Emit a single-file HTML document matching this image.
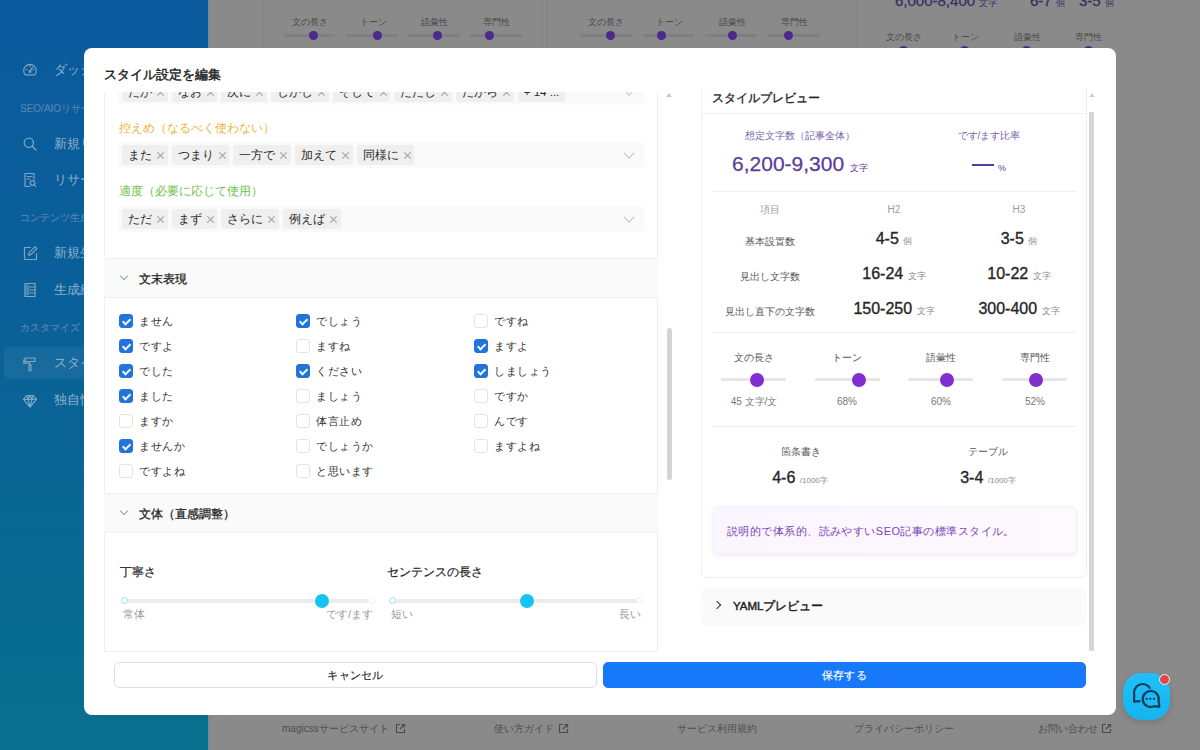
<!DOCTYPE html>
<html lang="ja">
<head>
<meta charset="utf-8">
<style>
*{box-sizing:border-box;margin:0;padding:0}
html,body{width:1200px;height:750px;overflow:hidden}
body{font-family:"Liberation Sans",sans-serif;background:#8a8a8a;position:relative;color:#262626}
.abs{position:absolute}
/* sidebar */
#side{left:0;top:0;width:208px;height:750px;background:linear-gradient(180deg,#0a5a9d 0%,#0a6099 40%,#08708e 100%)}
#sideedge{left:208px;top:0;width:3px;height:750px;background:#7d8a95}
.si{position:absolute;left:54px;font-size:13px;color:#8eb0cb;white-space:nowrap;line-height:16px}
.sl{position:absolute;left:20px;font-size:10px;color:#5584b3;-webkit-text-stroke:0.2px #5584b3;white-space:nowrap;line-height:12px}
.sic{position:absolute;left:23px;width:14px;height:14px}
#active{left:4px;top:347px;width:220px;height:32px;background:rgba(255,255,255,0.055);border-radius:6px}
/* bg content */
.vl{position:absolute;top:0;width:1px;background:#858585}
.bgl{position:absolute;font-size:9px;color:#4a4a4a;white-space:nowrap;transform:translateX(-50%);line-height:10px}
.trk{position:absolute;height:3px;background:#7f7f7f;border-radius:2px}
.dot{position:absolute;width:9px;height:9px;border-radius:50%;background:#4b2a8c}
.ft{position:absolute;top:722px;font-size:10px;color:#4d4d4d;white-space:nowrap;line-height:14px}
/* modal */

#modal{left:84px;top:48px;width:1032px;height:667px;background:#fff;border-radius:8px}
.ttl{font-size:13px;color:#1f1f1f;line-height:20px;white-space:nowrap;-webkit-text-stroke:0.45px #1f1f1f}
#lclip{left:104px;top:92px;width:558px;height:559px;overflow:hidden}
#lclip>div{position:absolute}
.sel{width:526px;height:26px;background:#fafafa;border-radius:4px;padding:3px 4px;white-space:nowrap;font-size:0}
.tg{display:inline-block;height:20px;line-height:20px;background:#efefef;border-radius:3px;padding:0 15.5px 0 6px;margin-right:4.2px;font-size:11.5px;color:#2b2b2b;vertical-align:top;position:relative}
.tx{position:absolute;right:3.5px;top:6.5px;width:7px;height:7px}.tx::before,.tx::after{content:"";position:absolute;left:-1px;top:3px;width:9px;height:1px;background:#a0a0a0;transform:rotate(45deg)}.tx::after{transform:rotate(-45deg)}
.chev{position:absolute;right:11px;top:7px;width:8px;height:8px;border-right:1px solid #c4c4c4;border-bottom:1px solid #c4c4c4;transform:rotate(45deg)}
.lbl{font-size:12px;line-height:16px;white-space:nowrap}
.chd{left:0;width:554px;height:40px;background:#fafafa;border-top:1px solid #f0f0f0;border-bottom:1px solid #f0f0f0}
.chd span{position:absolute;left:35px;top:11px;font-size:12px;color:#262626;line-height:18px;white-space:nowrap;-webkit-text-stroke:0.3px #262626}
.cv{position:absolute;left:17px;top:14px;width:6px;height:6px;border-right:1px solid #7fa6bd;border-bottom:1px solid #7fa6bd;transform:rotate(45deg)}
.cb{width:14px;height:14px;border:1px solid #e3e3e3;border-radius:3px;background:#fff}
.cb.on{background:#2273da;border-color:#2273da}
.cb.on::after{content:"";position:absolute;left:3.8px;top:1.6px;width:3.2px;height:6.2px;border-right:2.2px solid #f2fbff;border-bottom:2.2px solid #f2fbff;transform:rotate(45deg)}
.cbl{font-size:11px;letter-spacing:0.5px;line-height:16px;color:#333;white-space:nowrap}
.slab{font-size:12px;color:#262626;line-height:16px;white-space:nowrap;-webkit-text-stroke:0.2px #262626}
.strk{height:4px;background:#ededed;border-radius:2px}
.sdot{width:7px;height:7px;border-radius:50%;border:1.5px solid #9fdcf0;background:#fff}
.sdot.e{border-color:#f2f2f2}
.sthumb{width:14px;height:14px;border-radius:50%;background:#17c3f2}
.smk{font-size:11px;color:#9a9a9a;line-height:14px;white-space:nowrap}
#rclip{left:700px;top:88px;width:388px;height:563px;overflow:hidden}
#rclip>div{position:absolute}
.rcard{border:1px solid #f0f0f0;border-radius:6px;background:#fff}
.rtitle{font-size:12px;color:#1f1f1f;line-height:18px;white-space:nowrap;-webkit-text-stroke:0.35px #1f1f1f}
.c{text-align:center;white-space:nowrap}
.psub{font-size:10px;color:#7a62a8;line-height:14px}
.pbig{font-size:21px;color:#5a3c98;line-height:28px;-webkit-text-stroke:0.25px #5a3c98}
.pbig small{-webkit-text-stroke:0}
.pbig small{font-size:9px;color:#5b3c98}
.thd{font-size:10px;color:#9a9a9a;line-height:14px}
.tlab{font-size:10px;color:#555;line-height:14px}
.tval{font-size:16px;color:#262626;line-height:20px;-webkit-text-stroke:0.35px #262626}
.tval small{font-size:9px;color:#8a8a8a;-webkit-text-stroke:0}
.tval2{font-size:16px;color:#262626;line-height:22px;-webkit-text-stroke:0.35px #262626}
.tval2 small{font-size:8px;color:#8a8a8a;-webkit-text-stroke:0}
.tsm{font-size:10px;color:#777;line-height:14px}
.ptrk{width:65px;height:3px;background:#e6e6e6;border-radius:2px}
.pdot{width:14px;height:14px;border-radius:50%;background:#7f2fd0}
.desc{width:364px;height:48px;border-radius:6px;background:linear-gradient(90deg,#fbf5fe,#fdf9fe);border:1px solid #f5eff9;box-shadow:0 2px 5px rgba(90,40,140,0.09);padding:15px 0 0 13px;font-size:11px;letter-spacing:0.45px;color:#7a42b8;white-space:nowrap;line-height:18px}
.yaml{width:384px;height:36px;background:#fafafa;border-radius:6px;box-shadow:0 1px 3px rgba(0,0,0,0.05)}
.yaml span{position:absolute;left:31px;top:9px;font-size:11.5px;color:#1f1f1f;line-height:18px;white-space:nowrap;-webkit-text-stroke:0.45px #1f1f1f}
.yv{position:absolute;left:12px;top:14px;width:6px;height:6px;border-right:1.3px solid #333;border-bottom:1.3px solid #333;transform:rotate(-45deg)}
.btn{position:absolute;height:26px;border:1px solid #e0e0e0;border-radius:5px;background:#fff;text-align:center;font-size:11px;letter-spacing:0.3px;line-height:24px;color:#262626;-webkit-text-stroke:0.15px #262626}
.btn.pri{background:#1878fa;border-color:#1878fa;color:#fff;-webkit-text-stroke:0.15px #fff}
</style>
</head>
<body>
<div id="side" class="abs"></div>
<div id="sideedge" class="abs"></div>
<div id="active" class="abs"></div>

<!-- background content -->
<div class="vl" style="left:228px;height:750px;background:#888"></div>
<div class="vl" style="left:263px;height:48px"></div>
<div class="vl" style="left:542px;height:48px"></div>
<div class="vl" style="left:546px;height:48px"></div>
<div class="vl" style="left:856px;height:48px"></div>

<div class="bgl" style="left:310px;top:17px">文の長さ</div>
<div class="bgl" style="left:373px;top:17px">トーン</div>
<div class="bgl" style="left:434px;top:17px">語彙性</div>
<div class="bgl" style="left:496px;top:17px">専門性</div>
<div class="trk" style="left:284px;top:34px;width:51px"></div>
<div class="trk" style="left:346px;top:34px;width:52px"></div>
<div class="trk" style="left:408px;top:34px;width:52px"></div>
<div class="trk" style="left:470px;top:34px;width:52px"></div>
<div class="dot" style="left:309px;top:31px"></div>
<div class="dot" style="left:373px;top:31px"></div>
<div class="dot" style="left:433px;top:31px"></div>
<div class="dot" style="left:485px;top:31px"></div>

<div class="bgl" style="left:606px;top:17px">文の長さ</div>
<div class="bgl" style="left:669px;top:17px">トーン</div>
<div class="bgl" style="left:732px;top:17px">語彙性</div>
<div class="bgl" style="left:794px;top:17px">専門性</div>
<div class="trk" style="left:580px;top:34px;width:52px"></div>
<div class="trk" style="left:643px;top:34px;width:51px"></div>
<div class="trk" style="left:705px;top:34px;width:52px"></div>
<div class="trk" style="left:768px;top:34px;width:52px"></div>
<div class="dot" style="left:606px;top:31px"></div>
<div class="dot" style="left:657px;top:31px"></div>
<div class="dot" style="left:728px;top:31px"></div>
<div class="dot" style="left:784px;top:31px"></div>

<div class="abs" style="left:895px;top:-8px;font-size:15px;color:#3b2d6c;white-space:nowrap;-webkit-text-stroke:0.3px #3b2d6c">6,000-8,400 <span style="font-size:9px;-webkit-text-stroke:0">文字</span></div>
<div class="abs" style="left:1030px;top:-8px;font-size:15px;color:#34305a;white-space:nowrap;-webkit-text-stroke:0.3px #34305a">6-7 <span style="font-size:9px;-webkit-text-stroke:0">個</span></div>
<div class="abs" style="left:1079px;top:-8px;font-size:15px;color:#34305a;white-space:nowrap;-webkit-text-stroke:0.3px #34305a">3-5 <span style="font-size:9px;-webkit-text-stroke:0">個</span></div>
<div class="dot" style="left:899px;top:46px"></div>
<div class="dot" style="left:960px;top:46px"></div>
<div class="dot" style="left:1022px;top:46px"></div>
<div class="dot" style="left:1084px;top:46px"></div>
<div class="bgl" style="left:904px;top:32px">文の長さ</div>
<div class="bgl" style="left:965px;top:32px">トーン</div>
<div class="bgl" style="left:1027px;top:32px">語彙性</div>
<div class="bgl" style="left:1088px;top:32px">専門性</div>

<div class="ft" style="left:282px">magicssサービスサイト</div>
<div class="ft" style="left:494px">使い方ガイド</div>
<div class="ft" style="left:677px">サービス利用規約</div>
<div class="ft" style="left:854px">プライバシーポリシー</div>
<div class="ft" style="left:1038px">お問い合わせ</div>


<!-- sidebar icons -->
<svg class="abs" style="left:22px;top:62px" width="16" height="16" viewBox="0 0 16 16" fill="none" stroke="#7ea5c4" stroke-width="1.2" stroke-linecap="round">
<path d="M3.2 12.8A6.3 6.3 0 1 1 12.8 12.8Z" stroke-linejoin="round"/><path d="M8 9.2L10.6 5.2"/><circle cx="8" cy="9.4" r="0.9"/><path d="M4.3 7.4l.6.3M8 3.6v.7M11.7 7.4l-.6.3"/>
</svg>
<svg class="abs" style="left:22px;top:136px" width="16" height="16" viewBox="0 0 16 16" fill="none" stroke="#7ea5c4" stroke-width="1.3" stroke-linecap="round">
<circle cx="6.8" cy="6.8" r="4.6"/><path d="M10.3 10.3L14 14"/>
</svg>
<svg class="abs" style="left:22px;top:172px" width="16" height="16" viewBox="0 0 16 16" fill="none" stroke="#7ea5c4" stroke-width="1.2" stroke-linecap="round" stroke-linejoin="round">
<path d="M8 14.5H3V1.5h9v5.5"/><path d="M5 4.5h5M5 7h3"/><circle cx="10.5" cy="11" r="2.3"/><path d="M12.2 12.7l1.6 1.6"/>
</svg>
<svg class="abs" style="left:22px;top:245px" width="16" height="16" viewBox="0 0 16 16" fill="none" stroke="#7ea5c4" stroke-width="1.2" stroke-linecap="round" stroke-linejoin="round">
<path d="M8.5 2.5H2.5v12h12v-6"/><path d="M6.5 10.2l.5-2.4 6-6 1.9 1.9-6 6z"/>
</svg>
<svg class="abs" style="left:22px;top:282px" width="16" height="16" viewBox="0 0 16 16" fill="none" stroke="#7ea5c4" stroke-width="1.2" stroke-linecap="round" stroke-linejoin="round">
<rect x="3" y="1.5" width="10" height="13"/><path d="M3 5h10M3 8h10M3 11h10M5 3.2h1M5 6.5h1M5 9.5h1M5 12.7h1"/>
</svg>
<svg class="abs" style="left:22px;top:356px" width="16" height="16" viewBox="0 0 16 16" fill="none" stroke="#7ea5c4" stroke-width="1.2" stroke-linecap="round" stroke-linejoin="round">
<path d="M3 2h10v3.5H3z"/><path d="M3 3.8H1.8v3.4h6.2v2"/><path d="M7 9.2h2v5.5H7z"/>
</svg>
<svg class="abs" style="left:22px;top:393px" width="16" height="16" viewBox="0 0 16 16" fill="none" stroke="#7ea5c4" stroke-width="1.2" stroke-linecap="round" stroke-linejoin="round">
<path d="M4.5 2.5h7l3 3.8L8 14 1.5 6.3z"/><path d="M1.5 6.3h13M6 6.3L8 14l2-7.7M5.2 2.7L6 6.3l2-3.8 2 3.8.8-3.6"/>
</svg>
<!-- footer link icons -->
<svg class="abs" style="left:395px;top:723px" width="11" height="11" viewBox="0 0 11 11" fill="none" stroke="#4a4a4a" stroke-width="1.1"><path d="M5 1.5H1.5v8h8V6"/><path d="M6.5 1.5h3v3M9.5 1.5L5 6"/></svg>
<svg class="abs" style="left:558px;top:723px" width="11" height="11" viewBox="0 0 11 11" fill="none" stroke="#4a4a4a" stroke-width="1.1"><path d="M5 1.5H1.5v8h8V6"/><path d="M6.5 1.5h3v3M9.5 1.5L5 6"/></svg>
<svg class="abs" style="left:1101px;top:723px" width="11" height="11" viewBox="0 0 11 11" fill="none" stroke="#4a4a4a" stroke-width="1.1"><path d="M5 1.5H1.5v8h8V6"/><path d="M6.5 1.5h3v3M9.5 1.5L5 6"/></svg>
<!-- sidebar items -->
<div class="si" style="top:62px">ダッシュボード</div>
<div class="sl" style="top:103px">SEO/AIOリサーチ</div>
<div class="si" style="top:136px">新規リサーチ</div>
<div class="si" style="top:172px">リサーチ結果</div>
<div class="sl" style="top:212px">コンテンツ生成</div>
<div class="si" style="top:245px">新規生成</div>
<div class="si" style="top:282px">生成結果一覧</div>
<div class="sl" style="top:322px">カスタマイズ</div>
<div class="si" style="top:355px">スタイル設定</div>
<div class="si" style="top:392px">独自情報</div>

<div id="modal" class="abs"></div>
<div class="abs ttl" style="left:104px;top:65px">スタイル設定を編集</div>
<div id="lclip" class="abs">
<div class="sel" style="left:14px;top:-13px"><span class="tg">だが<i class="tx"></i></span><span class="tg">なお<i class="tx"></i></span><span class="tg">次に<i class="tx"></i></span><span class="tg">しかし<i class="tx"></i></span><span class="tg">そして<i class="tx"></i></span><span class="tg">ただし<i class="tx"></i></span><span class="tg">だから<i class="tx"></i></span><span class="tg" style="padding-right:6px">+ 14 ...</span><i class="chev"></i></div>
<div class="lbl" style="left:15px;top:28px;color:#f0b33c">控えめ（なるべく使わない）</div>
<div class="sel" style="left:14px;top:50px"><span class="tg">また<i class="tx"></i></span><span class="tg">つまり<i class="tx"></i></span><span class="tg">一方で<i class="tx"></i></span><span class="tg">加えて<i class="tx"></i></span><span class="tg">同様に<i class="tx"></i></span><i class="chev"></i></div>
<div class="lbl" style="left:15px;top:91px;color:#6cc24a">適度（必要に応じて使用）</div>
<div class="sel" style="left:14px;top:114px"><span class="tg">ただ<i class="tx"></i></span><span class="tg">まず<i class="tx"></i></span><span class="tg">さらに<i class="tx"></i></span><span class="tg">例えば<i class="tx"></i></span><i class="chev"></i></div>
<div class="abs" style="left:0;top:0;width:1px;height:600px;background:#f0f0f0"></div>
<div class="abs" style="left:553px;top:0;width:1px;height:600px;background:#f0f0f0"></div>
<div class="chd" style="top:166px"><i class="cv"></i><span>文末表現</span></div>
<div class="cb on" style="left:15px;top:222px"></div>
<div class="cbl" style="left:35px;top:221px">ません</div>
<div class="cb on" style="left:15px;top:247px"></div>
<div class="cbl" style="left:35px;top:246px">ですよ</div>
<div class="cb on" style="left:15px;top:272px"></div>
<div class="cbl" style="left:35px;top:271px">でした</div>
<div class="cb on" style="left:15px;top:297px"></div>
<div class="cbl" style="left:35px;top:296px">ました</div>
<div class="cb" style="left:15px;top:322px"></div>
<div class="cbl" style="left:35px;top:321px">ますか</div>
<div class="cb on" style="left:15px;top:347px"></div>
<div class="cbl" style="left:35px;top:346px">ませんか</div>
<div class="cb" style="left:15px;top:372px"></div>
<div class="cbl" style="left:35px;top:371px">ですよね</div>
<div class="cb on" style="left:192px;top:222px"></div>
<div class="cbl" style="left:212px;top:221px">でしょう</div>
<div class="cb" style="left:192px;top:247px"></div>
<div class="cbl" style="left:212px;top:246px">ますね</div>
<div class="cb on" style="left:192px;top:272px"></div>
<div class="cbl" style="left:212px;top:271px">ください</div>
<div class="cb" style="left:192px;top:297px"></div>
<div class="cbl" style="left:212px;top:296px">ましょう</div>
<div class="cb" style="left:192px;top:322px"></div>
<div class="cbl" style="left:212px;top:321px">体言止め</div>
<div class="cb" style="left:192px;top:347px"></div>
<div class="cbl" style="left:212px;top:346px">でしょうか</div>
<div class="cb" style="left:192px;top:372px"></div>
<div class="cbl" style="left:212px;top:371px">と思います</div>
<div class="cb" style="left:370px;top:222px"></div>
<div class="cbl" style="left:390px;top:221px">ですね</div>
<div class="cb on" style="left:370px;top:247px"></div>
<div class="cbl" style="left:390px;top:246px">ますよ</div>
<div class="cb on" style="left:370px;top:272px"></div>
<div class="cbl" style="left:390px;top:271px">しましょう</div>
<div class="cb" style="left:370px;top:297px"></div>
<div class="cbl" style="left:390px;top:296px">ですか</div>
<div class="cb" style="left:370px;top:322px"></div>
<div class="cbl" style="left:390px;top:321px">んです</div>
<div class="cb" style="left:370px;top:347px"></div>
<div class="cbl" style="left:390px;top:346px">ますよね</div>
<div class="chd" style="top:401px"><i class="cv"></i><span>文体（直感調整）</span></div>
<div class="slab" style="left:16px;top:472px">丁寧さ</div>
<div class="slab" style="left:283px;top:472px">センテンスの長さ</div>
<div class="strk" style="left:18px;top:507px;width:253px"></div><div class="sdot" style="left:17px;top:505px"></div><div class="sdot e" style="left:264px;top:505px"></div><div class="sthumb" style="left:211px;top:502px"></div><div class="smk" style="left:19px;top:515px">常体</div><div class="smk" style="right:289px;top:515px">です/ます</div>
<div class="strk" style="left:286px;top:507px;width:253px"></div><div class="sdot" style="left:285px;top:505px"></div><div class="sdot e" style="left:532px;top:505px"></div><div class="sthumb" style="left:416px;top:502px"></div><div class="smk" style="left:287px;top:515px">短い</div><div class="smk" style="right:21px;top:515px">長い</div>
</div>
<div class="abs" style="left:666px;top:93px;width:0;height:0;border-left:3px solid transparent;border-right:3px solid transparent;border-bottom:4px solid #c8c8c8"></div>
<div class="abs" style="left:667px;top:328px;width:5px;height:152px;background:#d4d4d4;border-radius:3px"></div>
<div class="abs" style="left:104px;top:651px;width:554px;height:1px;background:#f0f0f0"></div>
<div id="rclip" class="abs">
<div class="rcard" style="left:1px;top:-30px;width:386px;height:520px"></div>
<div class="abs rtitle" style="left:12px;top:1px">スタイルプレビュー</div>
<div class="abs" style="left:1px;top:25px;width:386px;height:1px;background:#f0f0f0"></div>
<div class="c psub" style="left:0px;top:41px;width:200px">想定文字数（記事全体）</div>
<div class="c pbig" style="left:0px;top:62px;width:200px">6,200-9,300 <small>文字</small></div>
<div class="c psub" style="left:189px;top:41px;width:200px">です/ます比率</div>
<div class="abs" style="left:272px;top:76px;width:22px;height:2px;background:#5b3c98"></div>
<div class="abs" style="left:298px;top:74px;font-size:9px;color:#5b3c98;line-height:12px">%</div>
<div class="abs" style="left:12px;top:103px;width:364px;height:1px;background:#f0f0f0"></div>
<div class="c thd" style="left:-30px;top:115px;width:200px">項目</div>
<div class="c thd" style="left:94px;top:115px;width:200px">H2</div>
<div class="c thd" style="left:219px;top:115px;width:200px">H3</div>
<div class="c tlab" style="left:-30px;top:147px;width:200px">基本設置数</div>
<div class="c tval" style="left:94px;top:141px;width:200px">4-5 <small>個</small></div>
<div class="c tval" style="left:219px;top:141px;width:200px">3-5 <small>個</small></div>
<div class="c tlab" style="left:-30px;top:182px;width:200px">見出し文字数</div>
<div class="c tval" style="left:94px;top:176px;width:200px">16-24 <small>文字</small></div>
<div class="c tval" style="left:219px;top:176px;width:200px">10-22 <small>文字</small></div>
<div class="c tlab" style="left:-30px;top:216.5px;width:200px">見出し直下の文字数</div>
<div class="c tval" style="left:94px;top:210.5px;width:200px">150-250 <small>文字</small></div>
<div class="c tval" style="left:219px;top:210.5px;width:200px">300-400 <small>文字</small></div>
<div class="abs" style="left:12px;top:244px;width:364px;height:1px;background:#f0f0f0"></div>
<div class="c tlab" style="left:-46px;top:263px;width:200px">文の長さ</div>
<div class="ptrk" style="left:21px;top:290px"></div>
<div class="pdot" style="left:50px;top:285px"></div>
<div class="c tsm" style="left:-46px;top:307px;width:200px">45 文字/文</div>
<div class="c tlab" style="left:47px;top:263px;width:200px">トーン</div>
<div class="ptrk" style="left:115px;top:290px"></div>
<div class="pdot" style="left:152px;top:285px"></div>
<div class="c tsm" style="left:47px;top:307px;width:200px">68%</div>
<div class="c tlab" style="left:141px;top:263px;width:200px">語彙性</div>
<div class="ptrk" style="left:208px;top:290px"></div>
<div class="pdot" style="left:240px;top:285px"></div>
<div class="c tsm" style="left:141px;top:307px;width:200px">60%</div>
<div class="c tlab" style="left:235px;top:263px;width:200px">専門性</div>
<div class="ptrk" style="left:302px;top:290px"></div>
<div class="pdot" style="left:329px;top:285px"></div>
<div class="c tsm" style="left:235px;top:307px;width:200px">52%</div>
<div class="abs" style="left:12px;top:338px;width:364px;height:1px;background:#f0f0f0"></div>
<div class="c tlab" style="left:1px;top:357px;width:200px">箇条書き</div>
<div class="c tlab" style="left:188px;top:357px;width:200px">テーブル</div>
<div class="c tval2" style="left:0px;top:379px;width:200px">4-6 <small>/1000字</small></div>
<div class="c tval2" style="left:188px;top:379px;width:200px">3-4 <small>/1000字</small></div>
<div class="desc" style="left:13px;top:418px">説明的で体系的、読みやすいSEO記事の標準スタイル。</div>
<div class="yaml" style="left:2px;top:500px"><i class="yv"></i><span>YAMLプレビュー</span></div>
</div>
<div class="abs" style="left:1089px;top:93px;width:0;height:0;border-left:3px solid transparent;border-right:3px solid transparent;border-bottom:4px solid #d0d0d0"></div>
<div class="abs" style="left:1089px;top:112px;width:5px;height:539px;background:#d6d6d6;border-radius:1px"></div>
<div class="btn" style="left:114px;top:662px;width:483px">キャンセル</div>
<div class="btn pri" style="left:603px;top:662px;width:483px">保存する</div>
<div class="abs" style="left:1123px;top:673px;width:47px;height:47px;border-radius:19px;background:linear-gradient(180deg,#1fc0f8,#17b4f0);box-shadow:0 2px 6px rgba(0,0,0,0.16)"></div>
<svg class="abs" style="left:1123px;top:673px" width="47" height="47" viewBox="0 0 47 47" fill="none" stroke="#0f3a58" stroke-width="2.2" stroke-linecap="round" stroke-linejoin="round">
<path d="M28.1 19.5A8.5 8.5 0 0 0 11.1 19.5L11.1 28.6L18.5 28"/>
<circle cx="27.8" cy="26" r="10.6" fill="#1bbaf4" stroke="none"/>
<path d="M35.6 27.5A8 8 0 1 0 31 33.3L36.3 33.6Z" />
<circle cx="23.7" cy="25.8" r="1.15" fill="#0f3a58" stroke="none"/><circle cx="27.3" cy="25.8" r="1.15" fill="#0f3a58" stroke="none"/><circle cx="30.9" cy="25.8" r="1.15" fill="#0f3a58" stroke="none"/>
</svg>
<div class="abs" style="left:1159px;top:674px;width:11px;height:11px;border-radius:50%;background:#e04848;border:1.5px solid #f2f2f2"></div>
</body>
</html>
